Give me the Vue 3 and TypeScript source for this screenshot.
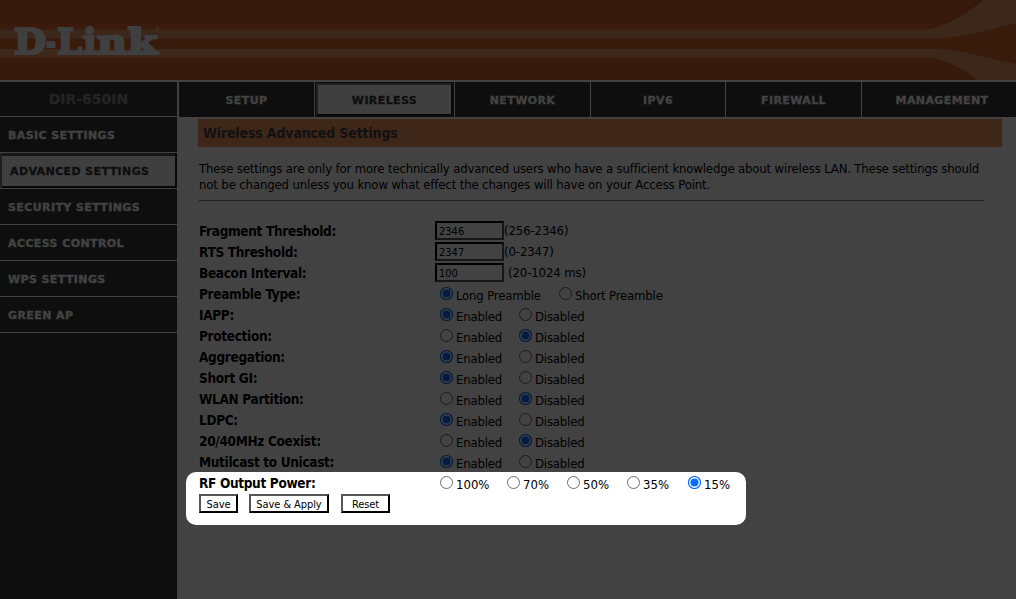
<script setup lang="ts">
interface Tab { label: string; width: number; active?: boolean }
interface Option { label: string; width: number }
interface RadioRow { label: string; options: Option[]; selected: number }

const logo = [
  { ch: 'D', x: 14, w: 32 },
  { ch: '-', x: 46, w: 10 },
  { ch: 'L', x: 57, w: 25 },
  { ch: 'i', x: 83, w: 13.5 },
  { ch: 'n', x: 97, w: 30 },
  { ch: 'k', x: 127.5, w: 30 },
]

const tabs: Tab[] = [
  { label: 'SETUP', width: 136 },
  { label: 'WIRELESS', width: 140, active: true },
  { label: 'NETWORK', width: 136 },
  { label: 'IPV6', width: 135 },
  { label: 'FIREWALL', width: 136 },
  { label: 'MANAGEMENT', width: 160 },
]

const sideItems = ['BASIC SETTINGS', 'ADVANCED SETTINGS', 'SECURITY SETTINGS', 'ACCESS CONTROL', 'WPS SETTINGS', 'GREEN AP']

const fields = [
  { label: 'Fragment Threshold:', value: '2346', hint: '(256-2346)' },
  { label: 'RTS Threshold:', value: '2347', hint: '(0-2347)' },
  { label: 'Beacon Interval:', value: '100', hint: '(20-1024 ms)', spaced: true },
]

const onOff: Option[] = [{ label: 'Enabled', width: 79 }, { label: 'Disabled', width: 70 }]

const radios: RadioRow[] = [
  { label: 'Preamble Type:', options: [{ label: 'Long Preamble', width: 119 }, { label: 'Short Preamble', width: 110 }], selected: 0 },
  { label: 'IAPP:', options: onOff, selected: 0 },
  { label: 'Protection:', options: onOff, selected: 1 },
  { label: 'Aggregation:', options: onOff, selected: 0 },
  { label: 'Short GI:', options: onOff, selected: 0 },
  { label: 'WLAN Partition:', options: onOff, selected: 1 },
  { label: 'LDPC:', options: onOff, selected: 0 },
  { label: '20/40MHz Coexist:', options: onOff, selected: 1 },
  { label: 'Mutilcast to Unicast:', options: onOff, selected: 0 },
  {
    label: 'RF Output Power:',
    options: [
      { label: '100%', width: 67 },
      { label: '70%', width: 60 },
      { label: '50%', width: 60 },
      { label: '35%', width: 61 },
      { label: '15%', width: 50 },
    ],
    selected: 4,
  },
]
</script>

<template>
  <div class="page">
    <header class="banner">
      <svg width="1016" height="80" viewBox="0 0 1016 80">
        <defs>
          <linearGradient id="orange" x1="0" y1="0" x2="0" y2="1">
            <stop offset="0" stop-color="#cc6030" />
            <stop offset="0.35" stop-color="#dd682f" />
            <stop offset="0.7" stop-color="#dd682f" />
            <stop offset="1" stop-color="#cc6233" />
          </linearGradient>
        </defs>
        <rect width="1016" height="80" fill="url(#orange)" />
        <path d="M0 29.500H929C949 25 966 14 984 0H1016V23C980 32 955 38 937 38.500H0Z" fill="#e59a6a" />
        <path d="M0 49H937C962 50 985 58 1016 64V80H977C962 68 948 60 929 57.500H0Z" fill="#e59a6a" />
        <text class="logo" y="54.200"><tspan v-for="l in logo" :key="l.ch" :x="l.x" :textLength="l.w" lengthAdjust="spacingAndGlyphs">{{ l.ch }}</tspan></text>
        <circle cx="157.500" cy="28.500" r="1.500" fill="none" stroke="#fff" stroke-width=".6" />
      </svg>
    </header>
    <div class="body">
      <aside class="side">
        <div class="model">DIR-650IN</div>
        <div v-for="(item, i) in sideItems" :key="item" class="side-item" :class="{ active: i === 1 }">{{ item }}</div>
      </aside>
      <div class="main">
        <nav class="tabs">
          <div v-for="tab in tabs" :key="tab.label" class="tab" :style="{ width: tab.width + 'px' }">
            <span :class="{ active: tab.active }">{{ tab.label }}</span>
          </div>
        </nav>
        <main class="content">
          <h1>Wireless Advanced Settings</h1>
          <p><span class="line1">These settings are only for more technically advanced users who have a sufficient knowledge about wireless LAN. These settings should</span><br><span class="line2">not be changed unless you know what effect the changes will have on your Access Point.</span></p>
          <div v-for="f in fields" :key="f.label" class="row">
            <label>{{ f.label }}</label>
            <div class="box">{{ f.value }}</div>
            <span class="hint" :class="{ spaced: f.spaced }">{{ f.hint }}</span>
          </div>
          <div v-for="r in radios" :key="r.label" class="row">
            <label>{{ r.label }}</label>
            <div class="options" :class="{ percent: r.options.length > 2 }">
              <div v-for="(o, i) in r.options" :key="o.label" class="option" :style="{ width: o.width + 'px' }">
                <svg width="13" height="13" viewBox="0 0 13 13">
                  <circle cx="6.500" cy="6.500" r="6" fill="#fff" :stroke="i === r.selected ? '#0a6cff' : '#6e6e6e'" :stroke-width="i === r.selected ? 1.200 : 1" />
                  <circle v-if="i === r.selected" cx="6.500" cy="6.500" r="4" fill="#0a6cff" />
                </svg>
                <span>{{ o.label }}</span>
              </div>
            </div>
          </div>
          <div class="buttons">
            <button class="save">Save</button>
            <button class="apply">Save &amp; Apply</button>
            <button class="reset">Reset</button>
          </div>
        </main>
      </div>
    </div>
    <div class="spotlight"></div>
  </div>
</template>

<style>
body { margin: 0; }
</style>

<style scoped>
* { box-sizing: border-box; }
.page {
  position: relative;
  width: 1016px;
  height: 599px;
  overflow: hidden;
  background: #fff;
  color: #000;
  font: 13px/16px "DejaVu Sans Condensed", "DejaVu Sans", sans-serif;
  font-stretch: semi-condensed;
}
.banner { height: 80px; }
.banner svg { display: block; }
.logo {
  font: bold 36px "DejaVu Serif", serif;
  fill: #f4f4f4;
  stroke: #f4f4f4;
  stroke-width: 2.200;
}
.body { display: flex; height: 519px; padding-top: 2px; }
.side, .tabs { font: bold 11px/35px "DejaVu Sans", sans-serif; letter-spacing: .4px; -webkit-text-stroke: .3px currentColor; }
.side { width: 177px; background: #363636; color: #fff; }
.model {
  height: 35px;
  border-bottom: 1px solid #fff;
  text-align: center;
  font-size: 14px;
  line-height: 35px;
  letter-spacing: 0;
  color: #888;
}
.side-item { height: 36px; padding-left: 8px; border-bottom: 1px solid #fff; line-height: 37px; }
.side-item.active {
  padding-left: 10px;
  color: #363636;
  background: #f0f4f0;
  box-shadow: inset 2px 0 #777, inset -2px -2px #222, inset 0 3px #555;
}
.main { width: 839px; }
.tabs { display: flex; height: 35px; margin-left: 2px; background: #363636; color: #fff; }
.tab { flex: none; height: 35px; border-right: 1px solid #fff; text-align: center; }
.tab:last-child { border: 0; }
.tab span { display: block; line-height: 37px; }
.tab .active {
  height: 33px;
  margin: 1px 1px 0;
  color: #363636;
  background: #f0f4f0;
  border: 2px solid #222;
  border-top-color: #777;
  border-left-color: #777;
  line-height: 31px;
}
.content { padding: 2px 0 0 21px; }
h1 {
  width: 804px;
  height: 28px;
  margin: 0;
  padding-left: 5px;
  background: #ee9260;
  color: #444;
  font: bold 14px/28px "DejaVu Sans Condensed", "DejaVu Sans", sans-serif;
  letter-spacing: -.15px;
}
p { width: 785px; height: 40px; margin: 14px 0 20px 1px; border-bottom: 1px solid #777; white-space: nowrap; }
.line1 { letter-spacing: -.151px; }
.line2 { letter-spacing: -.128px; }
.row { display: flex; height: 21px; padding-left: 1px; }
.row label { width: 236px; font-weight: bold; font-size: 13.500px; line-height: 21px; letter-spacing: -.32px; }
.box { width: 69px; height: 19px; padding-left: 2px; border: 2px inset #000; border-color: #111 #555 #555 #111; font-size: 11px; line-height: 18px; }
.hint { line-height: 20px; letter-spacing: -.1px; }
.spaced { margin-left: 4px; }
.options { display: flex; padding: 3px 0 0 5px; letter-spacing: -.17px; }
.options.percent { letter-spacing: 0; }
.option { display: flex; }
.option svg { flex: none; margin-right: 3px; }
.option span { line-height: 18px; white-space: nowrap; }
.buttons { display: flex; padding: 0 0 0 1px; }
button {
  height: 19px;
  padding: 1px 0 0;
  border: 2px solid #000;
  border-color: #555 #000 #000 #555;
  background: #fff;
  color: #000;
  font: 11px/15px "DejaVu Sans Condensed", "DejaVu Sans", sans-serif;
  letter-spacing: -.08px;
}
.save { width: 39px; margin-right: 11px; }
.apply { width: 80px; margin-right: 12px; }
.reset { width: 49px; }
.spotlight {
  position: absolute;
  left: 186px;
  top: 472px;
  width: 560px;
  height: 53px;
  border-radius: 10px;
  box-shadow: 0 0 0 1100px rgba(0, 0, 0, .74);
}
</style>
